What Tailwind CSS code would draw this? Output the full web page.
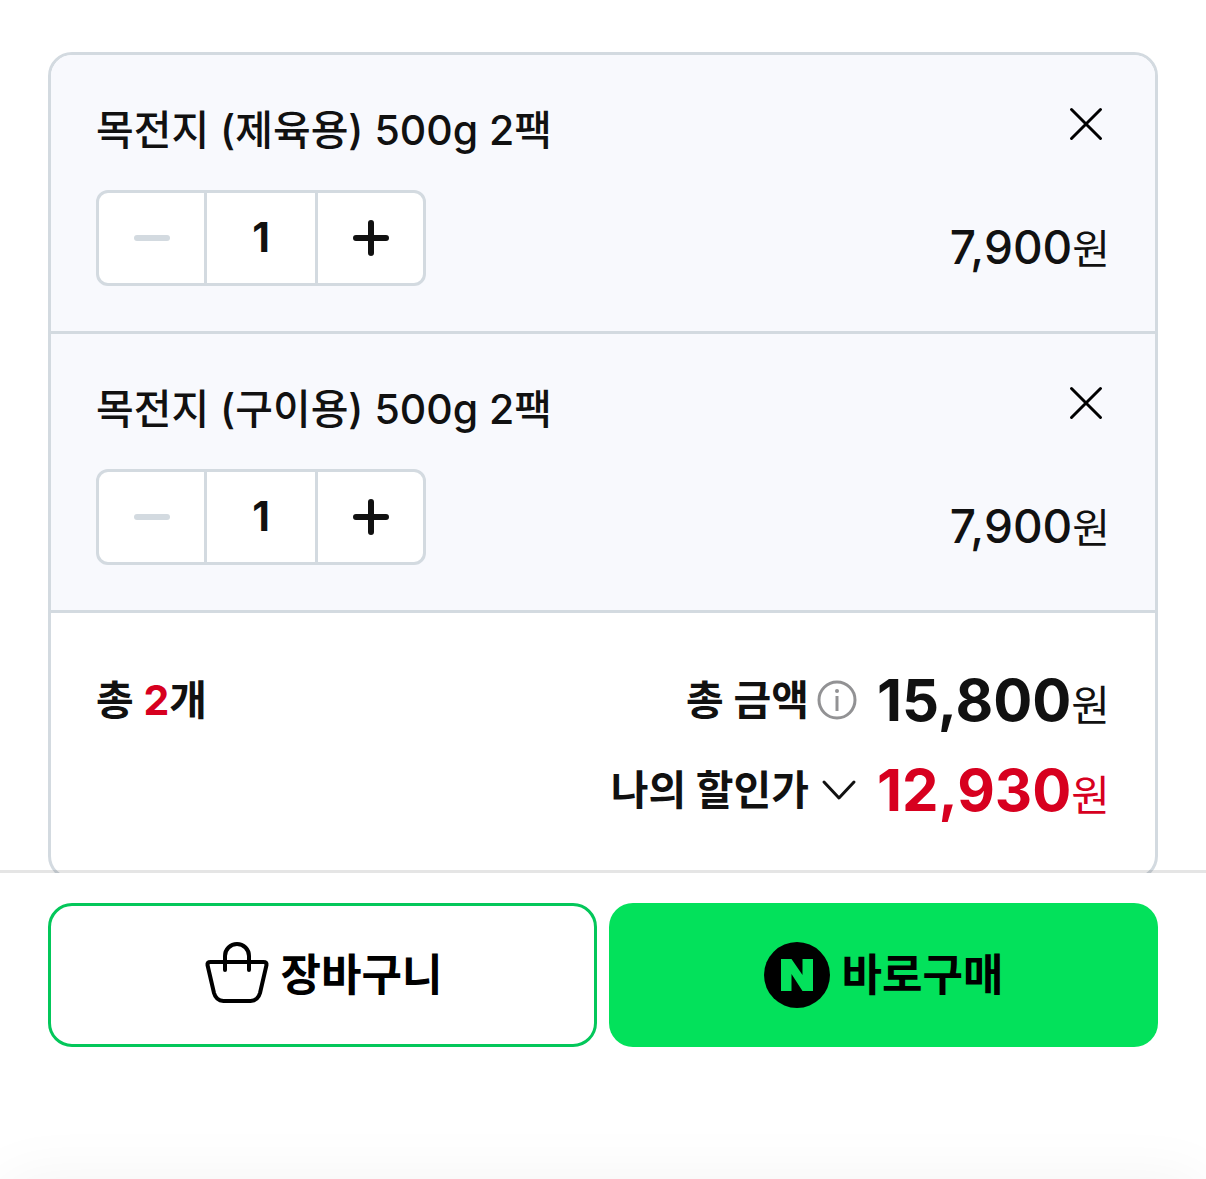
<!DOCTYPE html>
<html lang="ko">
<head>
  <meta charset="UTF-8" />
  <meta name="viewport" content="width=device-width, initial-scale=1.0" />
  <title>옵션 선택</title>
  <script src="https://cdn.jsdelivr.net/npm/@tailwindcss/browser@4"></script>
</head>
<body class="bg-white text-[#111] font-['Inter','Noto_Sans_CJK_KR',sans-serif]">
  <main class="px-12 pt-[52px] pb-[300px]">
    <div class="border-3 border-[#d3dae0] rounded-3xl overflow-hidden">
      <ul>
        <li class="bg-[#f8f9fd] border-b-3 border-[#d3dae0] p-[45px]">
          <div class="flex items-start justify-between mb-[30px]">
            <h2 class="text-[41px] leading-[60px] font-medium">목전지 (제육용) 500g 2팩</h2>
            <button type="button" aria-label="삭제" class="size-12 shrink-0">
              <svg class="size-12" viewBox="0 0 48 48" fill="none" stroke="#000" stroke-width="3" stroke-linecap="round"><path d="M9.5 9.5l29 29M38.5 9.5l-29 29" /></svg>
            </button>
          </div>
          <div class="flex items-end justify-between">
            <div class="flex h-24 border-3 border-[#d3dae0] rounded-xl bg-white overflow-hidden">
              <button type="button" disabled aria-label="수량 빼기" class="w-[105px] flex items-center justify-center">
                <svg class="size-9" viewBox="0 0 36 36" stroke="#d3dae0" stroke-width="6" stroke-linecap="round"><path d="M3 18h30" /></svg>
              </button>
              <input type="text" inputmode="numeric" value="1" aria-label="수량" class="w-[114px] border-x-3 border-[#d3dae0] text-center text-[41px] font-bold" />
              <button type="button" aria-label="수량 더하기" class="w-[105px] flex items-center justify-center">
                <svg class="size-9" viewBox="0 0 36 36" stroke="#111" stroke-width="6" stroke-linecap="round"><path d="M3 18h30M18 3v30" /></svg>
              </button>
            </div>
            <p class="text-[46px] leading-[78px] font-medium">7,900<span class="text-[41px] leading-none font-normal">원</span></p>
          </div>
        </li>
        <li class="bg-[#f8f9fd] border-b-3 border-[#d3dae0] p-[45px]">
          <div class="flex items-start justify-between mb-[30px]">
            <h2 class="text-[41px] leading-[60px] font-medium">목전지 (구이용) 500g 2팩</h2>
            <button type="button" aria-label="삭제" class="size-12 shrink-0">
              <svg class="size-12" viewBox="0 0 48 48" fill="none" stroke="#000" stroke-width="3" stroke-linecap="round"><path d="M9.5 9.5l29 29M38.5 9.5l-29 29" /></svg>
            </button>
          </div>
          <div class="flex items-end justify-between">
            <div class="flex h-24 border-3 border-[#d3dae0] rounded-xl bg-white overflow-hidden">
              <button type="button" disabled aria-label="수량 빼기" class="w-[105px] flex items-center justify-center">
                <svg class="size-9" viewBox="0 0 36 36" stroke="#d3dae0" stroke-width="6" stroke-linecap="round"><path d="M3 18h30" /></svg>
              </button>
              <input type="text" inputmode="numeric" value="1" aria-label="수량" class="w-[114px] border-x-3 border-[#d3dae0] text-center text-[41px] font-bold" />
              <button type="button" aria-label="수량 더하기" class="w-[105px] flex items-center justify-center">
                <svg class="size-9" viewBox="0 0 36 36" stroke="#111" stroke-width="6" stroke-linecap="round"><path d="M3 18h30M18 3v30" /></svg>
              </button>
            </div>
            <p class="text-[46px] leading-[78px] font-medium">7,900<span class="text-[41px] leading-none font-normal">원</span></p>
          </div>
        </li>
      </ul>

      <div class="flex justify-between px-[45px] py-[42px] text-[41px] leading-[90px] font-bold">
        <p>총 <span class="text-[#d7001f]">2</span>개</p>
        <dl>
          <div class="flex items-center justify-end">
            <dt class="flex items-center gap-2">
              총 금액
              <button type="button" aria-label="총 금액 안내">
                <svg class="size-10" viewBox="0 0 40 40" fill="none" stroke="#929294" stroke-width="3"><circle cx="20" cy="20" r="18" /><path d="M20 16v15" /><circle cx="20" cy="11" r="2" fill="#929294" stroke="none" /></svg>
              </button>
            </dt>
            <dd class="ml-5 text-[58px]">15,800<span class="text-[42px] leading-none font-normal">원</span></dd>
          </div>
          <div class="flex items-center justify-end">
            <dt>
              <button type="button" class="flex items-center gap-3">
                나의 할인가
                <svg class="w-9 h-6" viewBox="0 0 36 24" fill="none" stroke="#111" stroke-width="3" stroke-linecap="round" stroke-linejoin="round"><path d="M3 4l15 16L33 4" /></svg>
              </button>
            </dt>
            <dd class="ml-5 text-[58px] text-[#d7001f]">12,930<span class="text-[42px] leading-none font-normal">원</span></dd>
          </div>
        </dl>
      </div>
    </div>
  </main>

  <footer class="fixed inset-x-0 bottom-0 border-t-3 border-black/10 bg-white bg-clip-padding px-12 pt-[30px] pb-[132px]">
    <div class="grid grid-cols-2 gap-3">
      <button type="button" class="h-36 flex items-center justify-center gap-3 border-3 border-[#03c75a] rounded-3xl text-[44px] font-bold text-black">
        <svg class="size-[66px]" viewBox="0 0 66 66" fill="none" stroke="#000" stroke-width="4" stroke-linecap="round" stroke-linejoin="round"><path d="M22 28V14a12 12 0 0 1 24 0v14" /><path d="M7.500 20h53q3.500 0 3 3l-6.500 28q-2 7.500-9.500 8H20.500q-7.500-.5-9.500-8L4.500 23q-.5-3 3-3z" /></svg>
        장바구니
      </button>
      <button type="button" class="h-36 flex items-center justify-center gap-3 bg-[#03e15b] rounded-3xl text-[44px] font-bold text-black">
        <svg class="size-[66px]" viewBox="0 0 66 66"><circle cx="33" cy="33" r="33" /><path fill="#03e15b" d="M17 17h10.500l11 16V17H49v32H38.500l-11-17v17H17z" /></svg>
        바로구매
      </button>
    </div>
    <div class="absolute inset-x-0 top-full h-24 rounded-3xl shadow-[0_0_64px_rgba(0,0,0,0.05)]"></div>
  </footer>
</body>
</html>
